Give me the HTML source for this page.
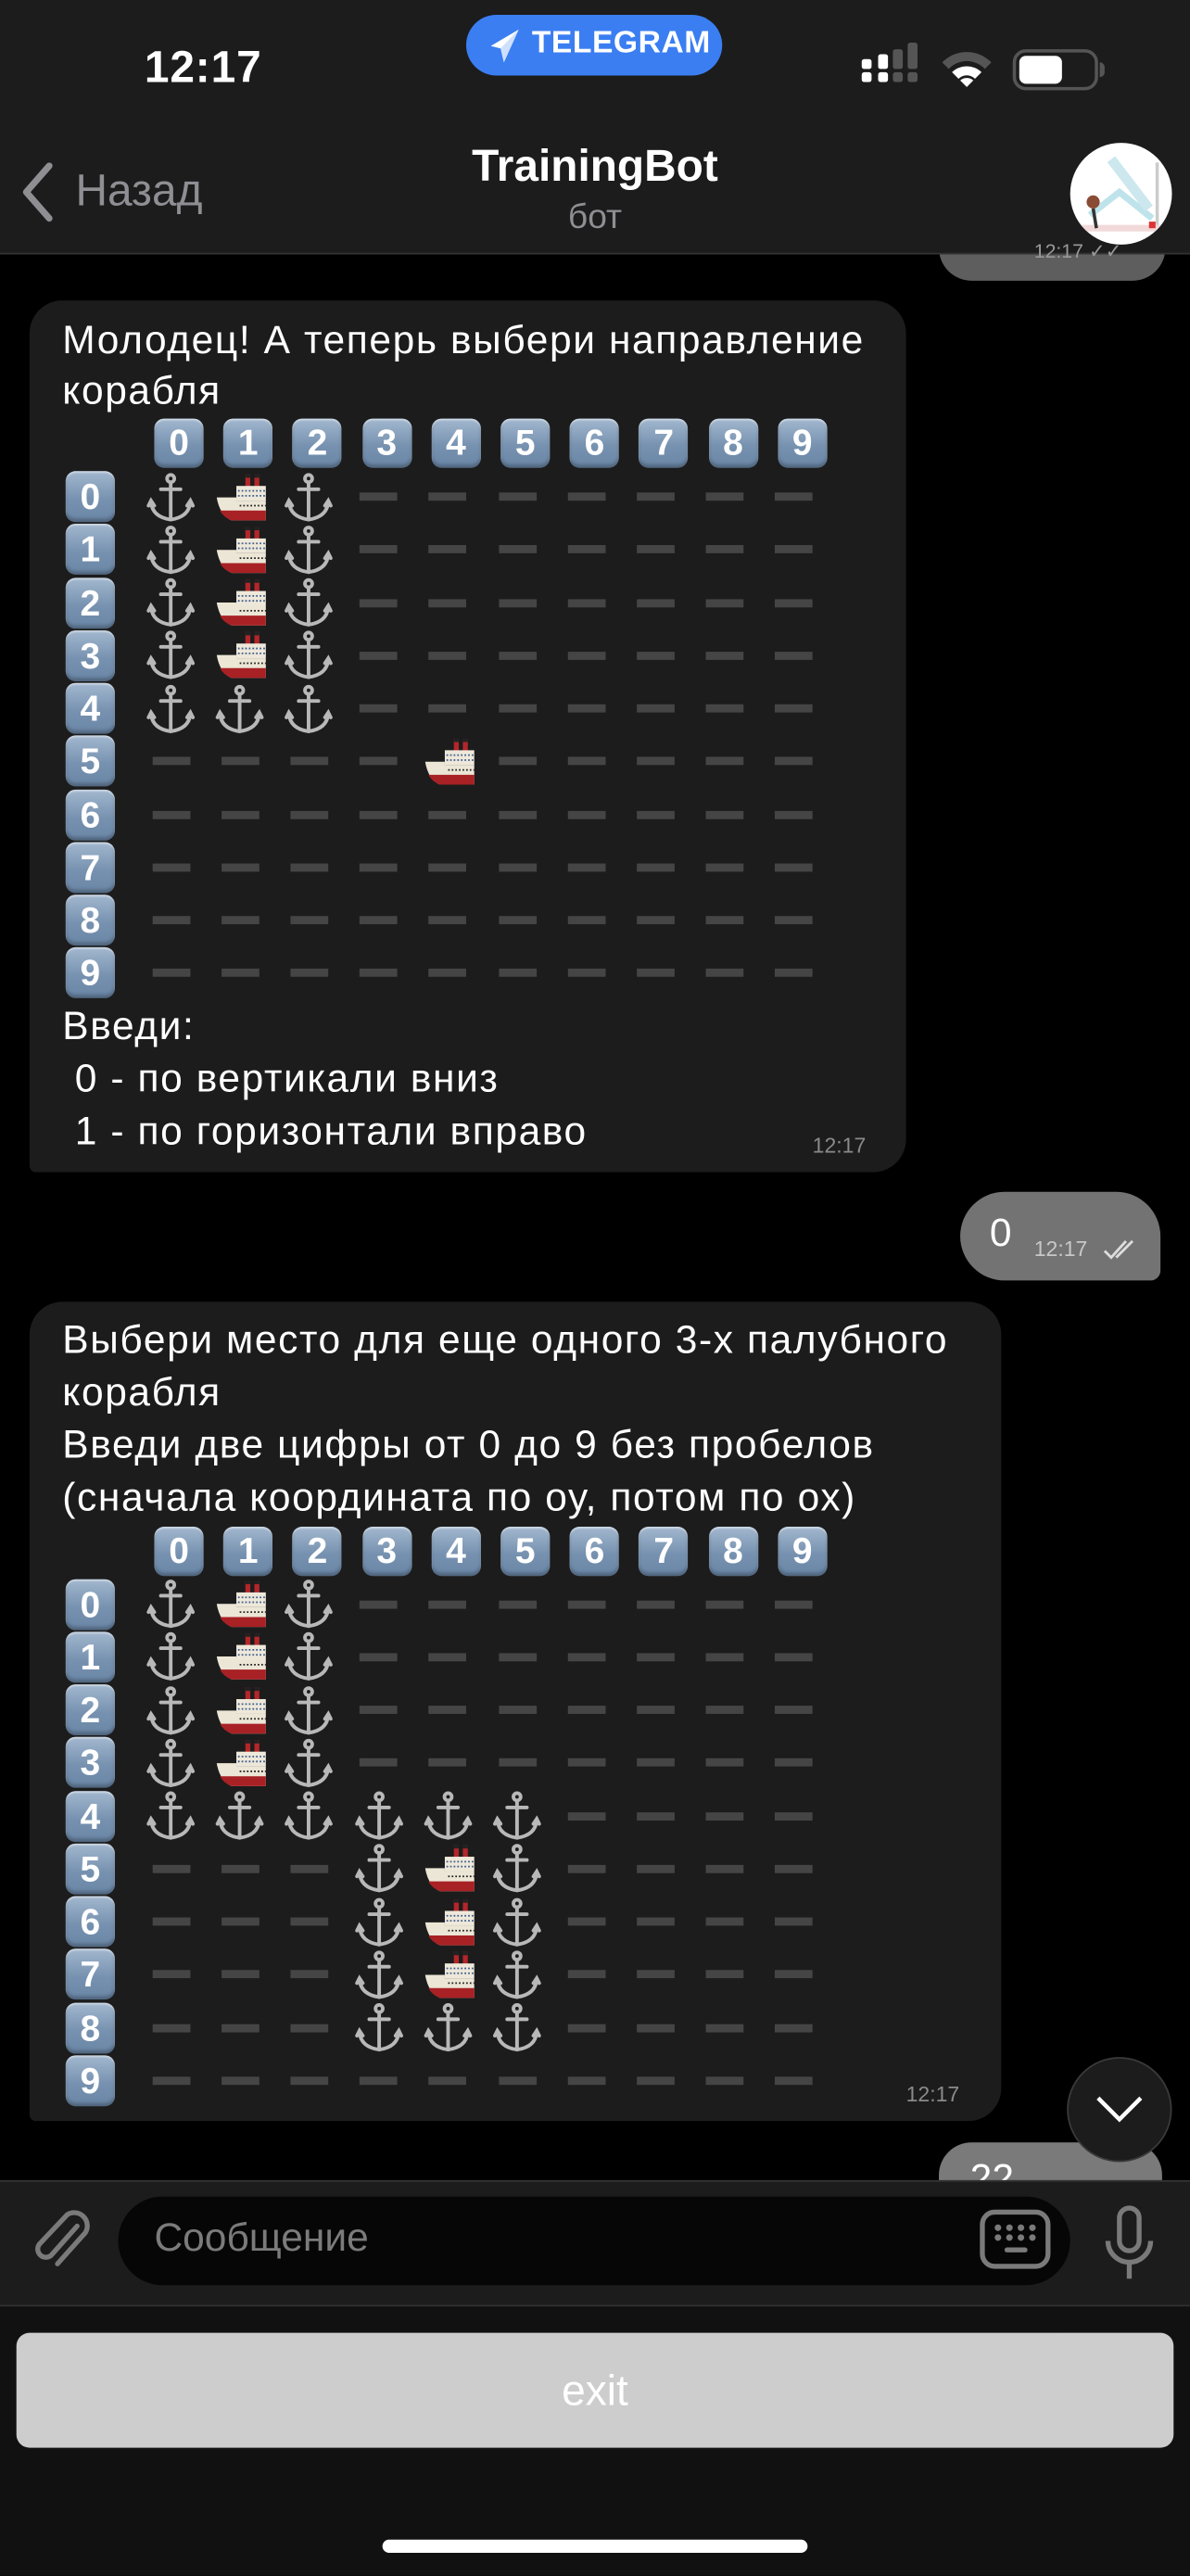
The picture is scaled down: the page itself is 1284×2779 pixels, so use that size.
<!DOCTYPE html>
<html><head><meta charset="utf-8">
<style>
*{margin:0;padding:0;box-sizing:border-box}
html,body{width:1284px;height:2778px;overflow:hidden;background:#000}
#root{position:absolute;left:0;top:0;width:725px;height:1568.6px;transform:scale(1.77103);transform-origin:0 0;background:#000;font-family:"Liberation Sans","DejaVu Sans",sans-serif;color:#fff}
.abs{position:absolute}
.txt{position:absolute;font-size:24px;letter-spacing:0.9px;line-height:32px;white-space:nowrap;color:#fff}
.bub{position:absolute;background:#1c1c1c;border-radius:20px}
.time{position:absolute;font-size:13px;color:#8a8a8a}
.key{position:absolute;width:30px;height:30px;border-radius:6px;background:linear-gradient(#a3b8cf,#7792b0 55%,#6a86a6);box-shadow:inset 0 -2px 2px rgba(0,0,0,.25),inset 0 1px 1px rgba(255,255,255,.5);color:#fff;font-weight:bold;font-size:22px;line-height:30px;text-align:center}
.dash{position:absolute;width:23px;height:5px;background:#454545}
.cell{position:absolute;width:30px;height:30px}
</style></head><body><div id="root">

<!-- partial top outgoing bubble -->
<div class="abs" style="left:572px;top:130px;width:138px;height:41px;background:#5e5e5e;border-radius:0 0 20px 20px"></div>

<!-- header -->
<div class="abs" style="left:0;top:0;width:725px;height:155px;background:#1c1c1c;border-bottom:1px solid #333"></div>
<div class="abs" style="left:630px;top:146px;font-size:12px;color:#999">12:17 ✓✓</div>
<div class="abs" style="left:88px;top:26px;font-size:27px;font-weight:bold;letter-spacing:0.5px">12:17</div>
<div class="abs" style="left:284px;top:9px;width:156px;height:37px;border-radius:19px;background:#3a7ef2"></div>
<svg class="abs" style="left:296px;top:16px" width="24" height="24" viewBox="0 0 24 24"><path d="M20 2 L3 12 L9 13.5 L11 22 Z" fill="#fff"/><path d="M9 13.5 L20 2 L11 22" fill="#cfe0ff"/></svg>
<div class="abs" style="left:324px;top:16px;font-size:19px;font-weight:bold;letter-spacing:0.3px">TELEGRAM</div>
<!-- signal -->
<div class="abs" style="left:525px;top:44px;width:6px;height:6px;border-radius:1.5px;background:#fff"></div>
<div class="abs" style="left:525px;top:36px;width:6px;height:6px;border-radius:1.5px;background:#fff"></div>
<div class="abs" style="left:535px;top:44px;width:6px;height:6px;border-radius:1.5px;background:#fff"></div>
<div class="abs" style="left:535px;top:33px;width:6px;height:9px;border-radius:1.5px;background:#fff"></div>
<div class="abs" style="left:544px;top:44px;width:6px;height:6px;border-radius:1.5px;background:#555"></div>
<div class="abs" style="left:544px;top:30px;width:6px;height:12px;border-radius:1.5px;background:#555"></div>
<div class="abs" style="left:553px;top:44px;width:6px;height:6px;border-radius:1.5px;background:#555"></div>
<div class="abs" style="left:553px;top:26px;width:6px;height:16px;border-radius:1.5px;background:#555"></div>
<svg class="abs" style="left:572px;top:29px" width="34" height="26" viewBox="0 0 34 26"><path d="M2 9 A21 21 0 0 1 32 9 L28 13 A15 15 0 0 0 6 13 Z" fill="#555"/><path d="M8 15 A13 13 0 0 1 26 15 L22 19 A7 7 0 0 0 12 19 Z" fill="#fff"/><path d="M13 20 A6 6 0 0 1 21 20 L17 24 Z" fill="#fff"/></svg>
<div class="abs" style="left:617px;top:30px;width:52px;height:25px;border:2.5px solid #555;border-radius:8px"></div>
<div class="abs" style="left:621px;top:34px;width:26px;height:17px;border-radius:4px;background:#fff"></div>
<div class="abs" style="left:670px;top:38px;width:3px;height:9px;border-radius:0 3px 3px 0;background:#555"></div>
<!-- nav -->
<svg class="abs" style="left:10px;top:98px" width="26" height="38" viewBox="0 0 26 38"><path d="M20 3 L6 19 L20 35" fill="none" stroke="#8e8e93" stroke-width="4" stroke-linecap="round" stroke-linejoin="round"/></svg>
<div class="abs" style="left:46px;top:101px;font-size:27px;color:#8e8e93">Назад</div>
<div class="abs" style="left:0;width:725px;text-align:center;top:86px;font-size:27px;font-weight:bold">TrainingBot</div>
<div class="abs" style="left:0;width:725px;text-align:center;top:121px;font-size:21px;color:#8e8e93">бот</div>
<div class="abs" style="left:652px;top:87px;width:62px;height:62px;border-radius:50%;background:#fff;overflow:hidden">
<svg width="62" height="62" viewBox="0 0 62 62"><rect x="6" y="50" width="50" height="4" fill="#f2dada"/><path d="M12 44 L30 30 L50 46" stroke="#bfe3ea" stroke-width="4" fill="none"/><path d="M25 10 L48 40" stroke="#cde7ee" stroke-width="6"/><circle cx="14" cy="36" r="4" fill="#8a4b35"/><path d="M14 40 L16 52" stroke="#333" stroke-width="2"/><rect x="52" y="12" width="2" height="38" fill="#ccc"/><rect x="48" y="48" width="4" height="4" fill="#d33"/></svg></div>

<!-- bubble 1 -->
<div class="bub" style="left:18px;top:183px;width:534px;height:531px;border-bottom-left-radius:4px"></div>
<div class="txt" style="left:38px;top:192px">Молодец! А теперь выбери направление</div>
<div class="txt" style="left:38px;top:223px">корабля</div>
<div id="g1"></div>
<div class="txt" style="left:38px;top:610px">Введи:</div>
<div class="txt" style="left:38px;top:642px">&nbsp;0 - по вертикали вниз</div>
<div class="txt" style="left:38px;top:674px">&nbsp;1 - по горизонтали вправо</div>
<div class="time" style="left:495px;top:690px">12:17</div>

<!-- outgoing 0 -->
<div class="abs" style="left:585px;top:726px;width:122px;height:54px;background:#737373;border-radius:27px;border-bottom-right-radius:6px"></div>
<div class="abs" style="left:603px;top:738px;font-size:24px">0</div>
<div class="abs" style="left:630px;top:753px;font-size:13px;color:#c8c8c8">12:17</div>
<svg class="abs" style="left:671px;top:754px" width="24" height="14" viewBox="0 0 24 14"><path d="M2 8 L6 12 L15 2 M9 12 L19 2" fill="none" stroke="#ddd" stroke-width="1.6"/></svg>

<!-- bubble 2 -->
<div class="bub" style="left:18px;top:793px;width:592px;height:499px;border-bottom-left-radius:4px"></div>
<div class="txt" style="left:38px;top:801px">Выбери место для еще одного 3-х палубного</div>
<div class="txt" style="left:38px;top:833px">корабля</div>
<div class="txt" style="left:38px;top:865px">Введи две цифры от 0 до 9 без пробелов</div>
<div class="txt" style="left:38px;top:897px">(сначала координата по оу, потом по ох)</div>
<div id="g2"></div>
<div class="time" style="left:552px;top:1268px">12:17</div>

<!-- partial bottom outgoing -->
<div class="abs" style="left:572px;top:1305px;width:136px;height:40px;background:#7a7a7a;border-radius:20px 20px 0 0"></div>
<div class="abs" style="left:591px;top:1314px;font-size:24px;color:#fff">22</div>
<!-- scroll down -->
<div class="abs" style="left:650px;top:1253px;width:64px;height:64px;border-radius:50%;background:#1c1c1c;border:1px solid #3a3a3a"></div>
<svg class="abs" style="left:666px;top:1275px" width="32" height="20" viewBox="0 0 32 20"><path d="M3 3 L16 16 L29 3" fill="none" stroke="#fff" stroke-width="2.5"/></svg>

<!-- input bar -->
<div class="abs" style="left:0;top:1328px;width:725px;height:77px;background:#1c1c1c;border-top:1px solid #333;border-bottom:1px solid #333"></div>
<svg class="abs" style="left:16px;top:1344px" width="42" height="42" viewBox="0 0 42 42"><path d="M30 12 L14 30 A5 5 0 0 1 7 23 L24 5 A8 8 0 0 1 35 16 L18 35" fill="none" stroke="#7a7a7a" stroke-width="3" stroke-linecap="round" transform="translate(1,0)"/></svg>
<div class="abs" style="left:72px;top:1338px;width:580px;height:54px;background:#060606;border-radius:27px"></div>
<div class="abs" style="left:94px;top:1350px;font-size:24px;color:#7b7b7b">Сообщение</div>
<div class="abs" style="left:597px;top:1346px;width:43px;height:36px;border:3px solid #7a7a7a;border-radius:9px"></div>
<svg class="abs" style="left:604px;top:1353px" width="30" height="24" viewBox="0 0 30 24"><g fill="#7a7a7a"><circle cx="4" cy="4" r="2"/><circle cx="11" cy="4" r="2"/><circle cx="18" cy="4" r="2"/><circle cx="25" cy="4" r="2"/><circle cx="4" cy="10" r="2"/><circle cx="11" cy="10" r="2"/><circle cx="18" cy="10" r="2"/><circle cx="25" cy="10" r="2"/><rect x="8" y="16" width="14" height="3" rx="1.5"/></g></svg>
<svg class="abs" style="left:670px;top:1342px" width="36" height="48" viewBox="0 0 36 48"><rect x="12" y="3" width="12" height="26" rx="6" fill="none" stroke="#7a7a7a" stroke-width="3"/><path d="M5 23 A13 13 0 0 0 31 23 M18 36 L18 46" fill="none" stroke="#7a7a7a" stroke-width="3"/></svg>

<!-- bottom -->
<div class="abs" style="left:0;top:1405px;width:725px;height:164px;background:#111"></div>
<div class="abs" style="left:10px;top:1421px;width:705px;height:70px;background:#cdcdcd;border-radius:8px;text-align:center;font-size:26px;line-height:70px;color:#fff">exit</div>
<div class="abs" style="left:233px;top:1547px;width:259px;height:8px;border-radius:4px;background:#fff"></div>
</div>

<script>
var ANCHOR='<svg width="30" height="30" viewBox="0 0 30 30"><g fill="none" stroke="#b8b8b8" stroke-width="2.2" stroke-linecap="round"><circle cx="15" cy="3.5" r="2.2"/><path d="M15 6 L15 28.5"/><path d="M9 10 L21 10"/><path d="M3 18 Q4 27 15 28.5 Q26 27 27 18"/><path d="M1.5 20 L3 17 L5 20 M25 20 L27 17 L28.5 20"/></g></svg>';
var SHIP='<svg width="30" height="30" viewBox="0 0 30 30"><rect x="17.5" y="1" width="3" height="8" fill="#b3262a"/><rect x="23" y="1" width="3" height="8" fill="#b3262a"/><rect x="17.5" y="1" width="3" height="2" fill="#222"/><rect x="23" y="1" width="3" height="2" fill="#222"/><rect x="12" y="8" width="18" height="9" fill="#eee8da"/><path d="M13 11 H30 M13 14 H30" stroke="#3b5b8c" stroke-dasharray="1 1.2" stroke-width="1"/><path d="M0 15 L12 15 L12 17 L30 17 L30 29 L9 29 Q2 26 0 15 Z" fill="#ece6d6"/><path d="M2 23 L30 23 L30 29 L9 29 Q4 27 2 23 Z" fill="#a82125"/><path d="M14 20 H30" stroke="#222" stroke-dasharray="1 1.2" stroke-width="1"/></svg>';
function grid(id,keyTop,rowTop,map){
  var h='';
  for(var c=0;c<10;c++) h+='<div class="key" style="left:'+(94+42.2*c)+'px;top:'+keyTop+'px">'+c+'</div>';
  for(var r=0;r<10;r++){
    var cy=rowTop+32.25*r;
    h+='<div class="key" style="left:40px;top:'+(cy-15.5)+'px;height:31px;line-height:31px">'+r+'</div>';
    for(var c=0;c<10;c++){
      var cx=104+42.2*c, v=map[r][c];
      if(v=='a') h+='<div class="cell" style="left:'+(cx-15)+'px;top:'+(cy-15)+'px">'+ANCHOR+'</div>';
      else if(v=='s') h+='<div class="cell" style="left:'+(cx-14)+'px;top:'+(cy-15)+'px">'+SHIP+'</div>';
      else h+='<div class="dash" style="left:'+(cx-11.5)+'px;top:'+(cy-2.5)+'px"></div>';
    }
  }
  document.getElementById(id).innerHTML=h;
}
var m1=["asa.......","asa.......","asa.......","asa.......","aaa.......","....s.....","..........","..........","..........",".........."];
var m2=["asa.......","asa.......","asa.......","asa.......","aaaaaa....","...asa....","...asa....","...asa....","...aaa....",".........."];
grid('g1',255,302.5,m1);
grid('g2',930,977,m2);
</script>
</body></html>
